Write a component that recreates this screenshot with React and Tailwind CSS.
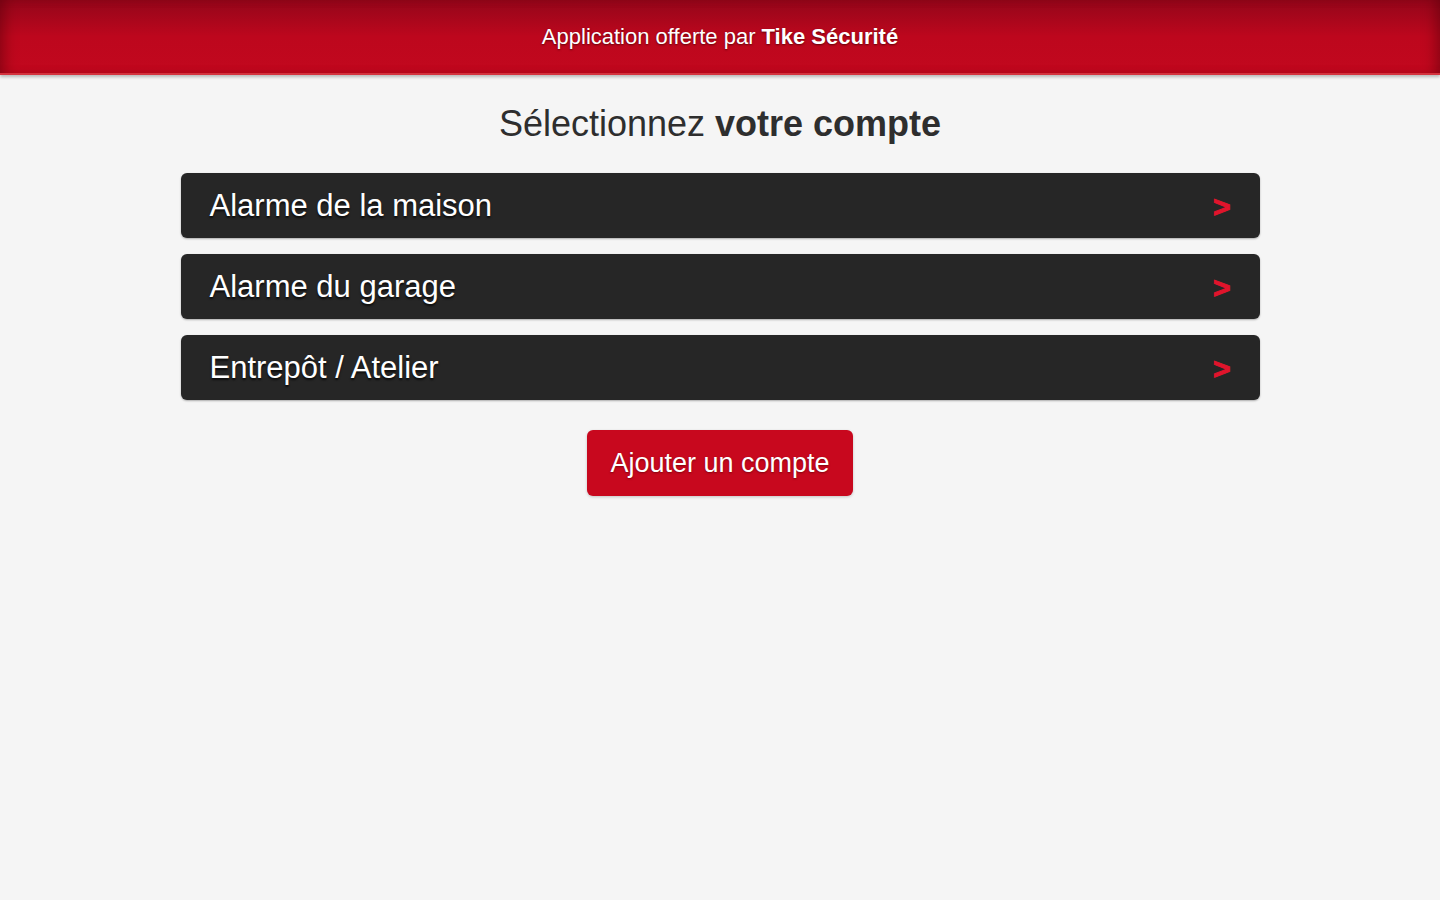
import React from "react";

const rows = ["Alarme de la maison", "Alarme du garage", "Entrepôt / Atelier"];

export default function App() {
  return (
    <div
      className="min-h-[900px] w-full bg-[#f5f5f5]"
      style={{ fontFamily: '"Liberation Sans", Arial, sans-serif' }}
    >
      <header className="h-[75px] w-full flex items-center justify-center bg-gradient-to-b from-[#94061a] via-[#bd071d] to-[#c2081e] shadow-[inset_12px_0_14px_-8px_rgba(80,0,10,0.5),inset_-12px_0_14px_-8px_rgba(80,0,10,0.5),0_2px_3px_rgba(0,0,0,0.25)] border-b-2 border-[#d4333f]">
        <p className="text-[22px] text-white [text-shadow:0_1px_2px_rgba(60,0,0,0.7)] pb-[1px]">
          Application offerte par <span className="font-bold">Tike Sécurité</span>
        </p>
      </header>

      <main className="flex flex-col items-center">
        <h1 className="mt-[23px] text-[36px] leading-[52px] text-[#2e2e2e]">
          Sélectionnez <span className="font-bold">votre compte</span>
        </h1>

        <div className="mt-[23px] w-[1079px] flex flex-col gap-[16px]">
          {rows.map((r) => (
            <div
              key={r}
              className="h-[65px] rounded-[6px] bg-[#262626] flex items-center justify-between pl-[29px] pr-[29px] pt-[2px] shadow-[0_1px_2px_rgba(0,0,0,0.3)]"
            >
              <span className="text-[31px] text-white [text-shadow:0_2px_2px_rgba(0,0,0,0.7)]">{r}</span>
              <span className="text-[30px] font-bold leading-none text-[#e0142c] [-webkit-text-stroke:1px_#e0142c]">&gt;</span>
            </div>
          ))}
        </div>

        <button className="mt-[30px] h-[66px] w-[266px] rounded-[6px] bg-[#c8081e] text-white text-[27px] [text-shadow:0_1px_2px_rgba(60,0,0,0.5)] shadow-[0_1px_3px_rgba(0,0,0,0.2)]">
          Ajouter un compte
        </button>
      </main>
    </div>
  );
}
